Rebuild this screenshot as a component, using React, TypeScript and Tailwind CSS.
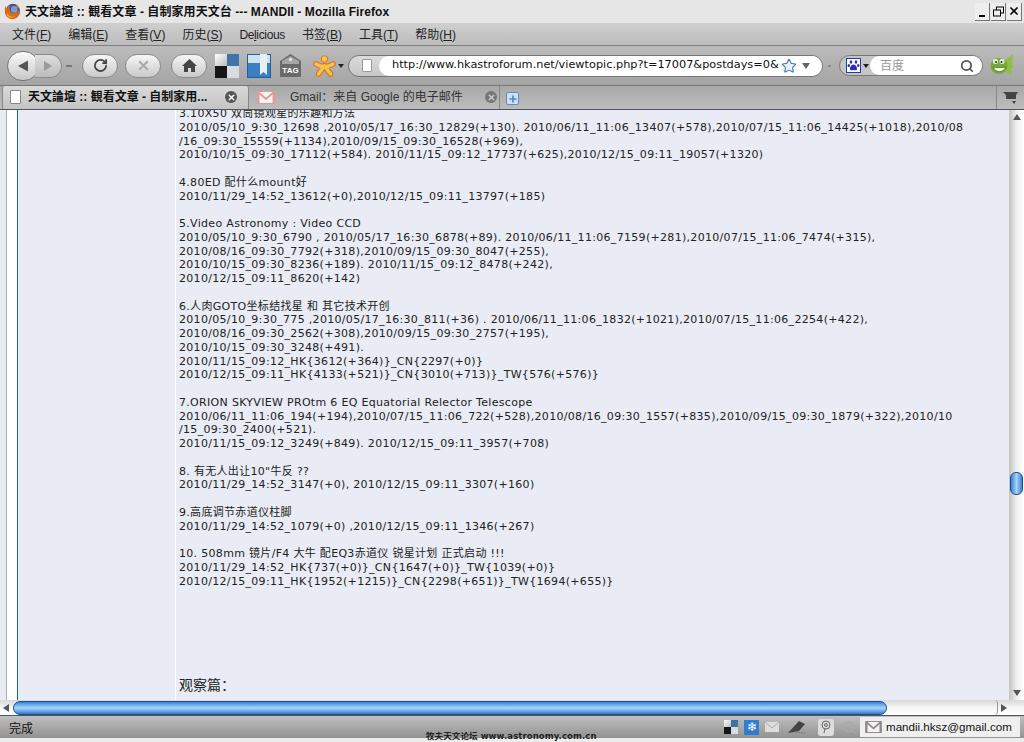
import { RotateCw, X, Search, Star, Plus } from 'lucide-react';

const lines = [
  '3.10X50 双筒镜观星的乐趣和方法',
  '2010/05/10_9:30_12698 ,2010/05/17_16:30_12829(+130). 2010/06/11_11:06_13407(+578),2010/07/15_11:06_14425(+1018),2010/08',
  '/16_09:30_15559(+1134),2010/09/15_09:30_16528(+969),',
  '2010/10/15_09:30_17112(+584). 2010/11/15_09:12_17737(+625),2010/12/15_09:11_19057(+1320)',
  '',
  '4.80ED 配什么mount好',
  '2010/11/29_14:52_13612(+0),2010/12/15_09:11_13797(+185)',
  '',
  '5.Video Astronomy : Video CCD',
  '2010/05/10_9:30_6790 , 2010/05/17_16:30_6878(+89). 2010/06/11_11:06_7159(+281),2010/07/15_11:06_7474(+315),',
  '2010/08/16_09:30_7792(+318),2010/09/15_09:30_8047(+255),',
  '2010/10/15_09:30_8236(+189). 2010/11/15_09:12_8478(+242),',
  '2010/12/15_09:11_8620(+142)',
  '',
  '6.人肉GOTO坐标结找星 和 其它技术开创',
  '2010/05/10_9:30_775 ,2010/05/17_16:30_811(+36) . 2010/06/11_11:06_1832(+1021),2010/07/15_11:06_2254(+422),',
  '2010/08/16_09:30_2562(+308),2010/09/15_09:30_2757(+195),',
  '2010/10/15_09:30_3248(+491).',
  '2010/11/15_09:12_HK{3612(+364)}_CN{2297(+0)}',
  '2010/12/15_09:11_HK{4133(+521)}_CN{3010(+713)}_TW{576(+576)}',
  '',
  '7.ORION SKYVIEW PROtm 6 EQ Equatorial Relector Telescope',
  '2010/06/11_11:06_194(+194),2010/07/15_11:06_722(+528),2010/08/16_09:30_1557(+835),2010/09/15_09:30_1879(+322),2010/10',
  '/15_09:30_2400(+521).',
  '2010/11/15_09:12_3249(+849). 2010/12/15_09:11_3957(+708)',
  '',
  '8. 有无人出让10"牛反 ??',
  '2010/11/29_14:52_3147(+0), 2010/12/15_09:11_3307(+160)',
  '',
  '9.高底调节赤道仪柱脚',
  '2010/11/29_14:52_1079(+0) ,2010/12/15_09:11_1346(+267)',
  '',
  '10. 508mm 镜片/F4 大牛 配EQ3赤道仪 锐星计划 正式启动 !!!',
  '2010/11/29_14:52_HK{737(+0)}_CN{1647(+0)}_TW{1039(+0)}',
  '2010/12/15_09:11_HK{1952(+1215)}_CN{2298(+651)}_TW{1694(+655)}',
];

const menus = [
  ['文件(', 'F', ')'],
  ['编辑(', 'E', ')'],
  ['查看(', 'V', ')'],
  ['历史(', 'S', ')'],
  ['De', 'l', 'icious'],
  ['书签(', 'B', ')'],
  ['工具(', 'T', ')'],
  ['帮助(', 'H', ')'],
];

function Firefox({ size = 17 }: { size?: number }) {
  return (
    <svg width={size} height={size} viewBox="0 0 20 20">
      <circle cx="10.500" cy="9.500" r="8.500" fill="#2f5797" />
      <circle cx="12" cy="7.500" r="4" fill="#7f9cc8" />
      <path d="M2 3c0 2 .5 3 1.500 4C4 5 6 3 8 3 6 5 6 7 7 9c1 3 5 4 8 2 2-1 3-3 3-5 2 5-1 13-8 13-5 0-9-4-9-9 0-3 0-5 1-7z" fill="#de6a12" />
      <path d="M4 12c2 4 7 5 10 3-3 3-9 3-11-1z" fill="#f3a02e" />
      <path d="M15 2c2 1 3 2 3 4l-3-1z" fill="#e78a1f" />
    </svg>
  );
}

function CheckerIcon({ size = 24 }: { size?: number }) {
  return (
    <svg width={size} height={size} viewBox="0 0 24 24">
      <defs>
        <linearGradient id="ck" x1="0" y1="0" x2="1" y2="1">
          <stop offset="0" stopColor="#fff" />
          <stop offset="1" stopColor="#bbb" />
        </linearGradient>
      </defs>
      <rect width="12" height="12" fill="url(#ck)" />
      <rect x="12" width="12" height="12" fill="#3f74ab" />
      <rect y="12" width="12" height="12" fill="#161616" />
      <rect x="12" y="12" width="12" height="12" fill="#d8dde2" />
    </svg>
  );
}

function BookmarkIcon() {
  return (
    <svg width="24" height="24" viewBox="0 0 24 24">
      <rect width="24" height="24" fill="#1f5f9f" />
      <rect x="1" y="1" width="22" height="8" fill="#cfe0ee" />
      <rect x="1" y="9" width="22" height="14" fill="#3a7fc0" />
      <path d="M13 0h7v21l-3.500-3-3.500 3z" fill="#e8eef4" />
    </svg>
  );
}

function TagIcon() {
  return (
    <svg width="21" height="23" viewBox="0 0 21 23">
      <path d="M0 7 10.500 0 21 7v16H0z" fill="#6a6a6a" />
      <path d="M2 7 10.500 2 19 7v3H2z" fill="#a5a5a5" />
      <circle cx="10.500" cy="5.500" r="1.500" fill="#efefef" />
      <text x="10.500" y="19" textAnchor="middle" fontSize="8" fontWeight="700" fill="#fff" fontFamily="Liberation Sans, sans-serif">TAG</text>
    </svg>
  );
}

function PersonIcon() {
  return (
    <svg width="23" height="22" viewBox="0 0 23 22" fill="none" strokeLinecap="round">
      <path d="M3 9c3 2 5 2.500 8.500 2.500S17 11 20 9M11.500 11 5.500 19M11.500 11l6 8" stroke="#d9701c" strokeWidth="5.500" />
      <path d="M3 9c3 2 5 2.500 8.500 2.500S17 11 20 9M11.500 11 5.500 19M11.500 11l6 8" stroke="#fbc34a" strokeWidth="3.500" />
      <circle cx="11.500" cy="4" r="3.300" fill="#fbc34a" stroke="#d9701c" />
    </svg>
  );
}

function Gator() {
  return (
    <svg width="25" height="24" viewBox="0 0 25 24">
      <path d="M13 8 23 0l-1 10 2 3-3 1 1 7-8-4z" fill="#8fbf45" />
      <ellipse cx="9" cy="12" rx="8.500" ry="8" fill="#7aa838" />
      <circle cx="5.500" cy="7.500" r="2.500" fill="#e8f2d8" />
      <circle cx="12" cy="7.500" r="2.500" fill="#e8f2d8" />
      <circle cx="6" cy="8" r="1" fill="#222" />
      <circle cx="11.500" cy="8" r="1" fill="#222" />
      <path d="M3 13c3 6 10 6 13 0-3 1-10 1-13 0z" fill="#fff" stroke="#3c6a16" strokeWidth=".7" />
    </svg>
  );
}

function Paw() {
  return (
    <svg width="15" height="15" viewBox="0 0 15 15">
      <rect x=".5" y=".5" width="14" height="14" fill="#fff" stroke="#1e3f94" />
      <g fill="#2a2ac0">
        <ellipse cx="5" cy="4" rx="1.300" ry="1.800" />
        <ellipse cx="10" cy="4" rx="1.300" ry="1.800" />
        <ellipse cx="2.800" cy="7.500" rx="1.200" ry="1.600" />
        <ellipse cx="12.200" cy="7.500" rx="1.200" ry="1.600" />
        <path d="M7.500 6.500c2 0 4 3 3.500 5-1 1.500-2.500.5-3.500.5S5 13 4 11.500C3.500 9.500 5.500 6.500 7.500 6.500z" />
      </g>
    </svg>
  );
}

function GmailM({ w = 18, h = 13, color = '#e49a9a' }: { w?: number; h?: number; color?: string }) {
  return (
    <svg width={w} height={h} viewBox="0 0 18 13">
      <rect x=".5" y=".5" width="17" height="12" fill="#f6f2f2" stroke={color} />
      <path d="M1 1l8 7 8-7" fill="none" stroke={color} strokeWidth="2" />
      <path d="M1.500 1v11M16.500 1v11" stroke={color} strokeWidth="2" />
    </svg>
  );
}

function PillButton({ children, className }: { children: React.ReactNode; className: string }) {
  return (
    <div className={`flex h-[24px] items-center justify-center rounded-full border border-[#8b8b8b] bg-gradient-to-b from-[#f6f6f6] to-[#c9c9c9] ${className}`}>
      {children}
    </div>
  );
}

export default function App() {
  return (
    <div className="relative flex h-[742px] w-[1024px] flex-col overflow-hidden bg-white font-['Liberation_Sans','Noto_Sans_CJK_SC',sans-serif] text-[#1c1c1c]">
      {/* Title bar */}
      <div className="flex h-[23px] shrink-0 items-center bg-[#e6e6e6] pl-[4px] pr-[2px]">
        <Firefox />
        <span className="ml-[4px] text-[12px] font-bold tracking-[0.07px] text-[#111]">天文論壇 :: 観看文章 - 自制家用天文台 --- MANDII - Mozilla Firefox</span>
        <div className="ml-auto flex gap-[1px]">
          <div className="flex h-[18px] w-[15px] items-end justify-center border-r border-b border-[#777] bg-[#eee] pb-[3px]"><div className="h-[2px] w-[6px] bg-black" /></div>
          <div className="flex h-[18px] w-[15px] items-center justify-center border-r border-b border-[#777] bg-[#eee]">
            <svg width="11" height="11" viewBox="0 0 11 11" fill="none" stroke="#000"><rect x="3.500" y="1" width="7" height="6" /><rect x=".5" y="4" width="7" height="6" fill="#eee" /></svg>
          </div>
          <div className="flex h-[18px] w-[15px] items-center justify-center border-r border-b border-[#777] bg-[#eee]"><X size={12} strokeWidth={3.5} color="#000" /></div>
        </div>
      </div>
      {/* Menu */}
      <div className="flex h-[23px] shrink-0 items-center gap-[17px] border-b border-[#7d7d7d] bg-gradient-to-b from-[#cfcfcf] to-[#bdbdbd] pl-[12px] pt-[2px] text-[12px] text-[#222]">
        {menus.map((m) => (
          <span key={m[0]} className={m[0] === 'De' ? 'tracking-[-0.35px]' : ''}>{m[0]}<span className="underline">{m[1]}</span>{m[2]}</span>
        ))}
      </div>
      {/* Nav toolbar */}
      <div className="flex h-[39px] shrink-0 items-center bg-gradient-to-b from-[#bcbcbc] to-[#a4a4a4] pl-[7px]">
        <div className="flex h-[30px] w-[32px] items-center justify-center rounded-full border border-[#777] bg-gradient-to-b from-[#fafafa] to-[#c8c8c8]">
          <svg width="12" height="12" viewBox="0 0 12 12"><path d="M1 6l10-5.500v11z" fill="#555" /></svg>
        </div>
        <div className="ml-[-4px] flex h-[24px] w-[27px] items-center justify-center rounded-r-full border border-l-0 border-[#8b8b8b] bg-gradient-to-b from-[#dedede] to-[#bcbcbc]">
          <svg width="10" height="10" viewBox="0 0 10 10"><path d="M1 0l8 5-8 5z" fill="#9a9a9a" /></svg>
        </div>
        <div className="ml-[4px] h-[2px] w-[6px] bg-[#777]" />
        <PillButton className="ml-[10px] w-[36px]"><RotateCw size={15} strokeWidth={2.8} color="#444" /></PillButton>
        <PillButton className="ml-[7px] w-[36px]"><X size={15} strokeWidth={3} color="#a9a9a9" /></PillButton>
        <PillButton className="ml-[10px] w-[36px]">
          <svg width="15" height="13" viewBox="0 0 15 13"><path d="M7.500 0 15 7h-2v6H9V9H6v4H2V7H0z" fill="#444" /></svg>
        </PillButton>
        <div className="ml-[8px]"><CheckerIcon /></div>
        <div className="ml-[8px]"><BookmarkIcon /></div>
        <div className="ml-[9px]"><TagIcon /></div>
        <div className="ml-[12px]"><PersonIcon /></div>
        <div className="ml-[2px] h-0 w-0 border-x-[3px] border-t-[4px] border-x-transparent border-t-[#222]" />
        {/* URL bar */}
        <div className="ml-[4px] flex h-[22px] w-[475px] items-center rounded-full border border-[#777] bg-gradient-to-b from-[#dcdcdc] to-[#c6c6c6] pl-[13px]">
          <div className="h-[13px] w-[10px] rounded-[1px] border border-[#999] bg-white" />
          <div className="ml-[7px] flex h-full flex-1 items-center overflow-hidden rounded-full bg-white pl-[13px]">
            <span className="flex-1 whitespace-nowrap font-['DejaVu_Sans',sans-serif] text-[11.3px] text-[#111]">http://www.hkastroforum.net/viewtopic.php?t=17007&amp;postdays=0&amp;</span>
            <Star size={16} strokeWidth={1.6} color="#3f74ab" fill="#eaf2fa" className="ml-[2px] shrink-0" />
            <div className="ml-[5px] mr-[12px] h-0 w-0 border-x-[4px] border-t-[6px] border-x-transparent border-t-[#666]" />
          </div>
        </div>
        <div className="ml-[5px] h-[2px] w-[3px] bg-[#888]" />
        <div className="ml-[8px] flex h-[21px] w-[144px] items-center rounded-full border border-[#777] bg-[#c6c6c6] pl-[6px]">
          <Paw />
          <div className="ml-[2px] h-0 w-0 border-x-[3px] border-t-[4px] border-x-transparent border-t-[#222]" />
          <div className="ml-[1px] flex h-full flex-1 items-center rounded-full bg-white pl-[10px] pr-[8px]">
            <span className="flex-1 text-[12px] text-[#9a9a9a]">百度</span>
            <Search size={14} strokeWidth={3} color="#555" />
          </div>
        </div>
        <div className="ml-[7px]"><Gator /></div>
      </div>
      {/* Tabs */}
      <div className="flex h-[25px] shrink-0 items-end border-y border-t-[#777] border-b-[#555] bg-gradient-to-b from-[#a8a8a8] to-[#bdbdbd] pl-[2px]">
        <div className="flex h-[23px] w-[247px] items-center rounded-t-[3px] border-x border-[#888] bg-gradient-to-b from-[#d9d9d9] to-[#c4c4c4] pb-[1px] pl-[7px]">
          <div className="h-[14px] w-[11px] rounded-[1px] border border-[#888] bg-white" />
          <span className="ml-[7px] w-[197px] whitespace-nowrap text-[12px] font-bold text-[#111]">天文論壇 :: 観看文章 - 自制家用...</span>
          <div className="flex h-[12px] w-[12px] items-center justify-center rounded-full bg-[#555]"><X size={9} strokeWidth={4} color="#fff" /></div>
        </div>
        <div className="ml-[2px] flex h-[23px] w-[249px] items-center border-r border-[#888] pb-[1px] pl-[6px]">
          <GmailM />
          <span className="ml-[15px] w-[195px] text-[12px] text-[#333]">Gmail：来自 Google 的电子邮件</span>
          <div className="flex h-[12px] w-[12px] items-center justify-center rounded-full bg-[#777]"><X size={9} strokeWidth={4} color="#ccc" /></div>
        </div>
        <div className="ml-[6px] mb-[4px] flex h-[13px] w-[13px] items-center justify-center rounded-[2px] border border-[#5c8fc7] bg-[#cfe0f2]"><Plus size={10} strokeWidth={4} color="#4f86c6" /></div>
        <div className="ml-auto flex h-[23px] w-[28px] items-center justify-center border-l border-[#888]">
          <svg width="15" height="12" viewBox="0 0 15 12"><path d="M0 0h15l-2 3v4H3V3z" fill="#444" /><path d="M9 9h4l-2 3z" fill="#444" /></svg>
        </div>
      </div>
      {/* Page + vertical scrollbar */}
      <div className="flex min-h-0 flex-1">
        <div className="flex min-w-0 flex-1">
          <div className="w-[6px] shrink-0 bg-[#e9ecf4]" />
          <div className="w-[1px] shrink-0 bg-[#a9acb2]" />
          <div className="w-[10px] shrink-0 bg-white" />
          <div className="w-[1px] shrink-0 bg-[#1f6f68]" />
          <div className="w-[157px] shrink-0 bg-[#e9ecf4]" />
          <div className="w-[1px] shrink-0 bg-white" />
          <div className="min-w-0 flex-1 overflow-hidden bg-[#e9ecf4] pl-[3px]">
            <div className="mt-[-3px] whitespace-nowrap font-['DejaVu_Sans','Noto_Sans_CJK_SC',sans-serif] text-[11px] leading-[13.76px] tracking-[0.31px] text-[#222]">
              {lines.map((line, i) => (
                <div key={i} className="h-[13.76px]">{line}</div>
              ))}
            </div>
            <div className="mt-[89px] font-['DejaVu_Sans','Noto_Sans_CJK_SC',sans-serif] text-[14px] leading-[16px] text-[#222]">观察篇：</div>
          </div>
        </div>
        <div className="flex w-[15px] shrink-0 flex-col items-center bg-gradient-to-r from-[#c2c2c2] via-[#eeeeee] to-white">
          <div className="mt-[4px] h-0 w-0 border-x-[4px] border-b-[6px] border-x-transparent border-b-[#555]" />
          <div className="mt-[352px] h-[23px] w-[13px] rounded-[6px] border border-[#1d4f8f] bg-gradient-to-r from-[#3d7fd0] via-[#a8d2f8] to-[#3d7fd0]" />
          <div className="mt-auto mb-[4px] h-0 w-0 border-x-[4px] border-t-[6px] border-x-transparent border-t-[#555]" />
        </div>
      </div>
      {/* Horizontal scrollbar */}
      <div className="flex h-[15px] shrink-0 items-center bg-gradient-to-b from-[#d8d8d8] via-[#f4f4f4] to-white pl-[3px]">
        <div className="h-0 w-0 border-y-[4px] border-r-[6px] border-y-transparent border-r-[#555]" />
        <div className="ml-[4px] h-[14px] w-[874px] rounded-[7px] border border-[#1d4f8f] bg-gradient-to-b from-[#3480dc] via-[#a8d8fa] to-[#2f78d4]" />
        <div className="ml-[107px] h-[15px] w-[4px] rounded-r-[4px] border-r border-[#999]" />
        <div className="ml-[3px] h-0 w-0 border-y-[4px] border-l-[6px] border-y-transparent border-l-[#555]" />
      </div>
      {/* Status bar */}
      <div className="flex h-[23px] shrink-0 items-center border-t border-[#555] bg-gradient-to-b from-[#c0c0c0] to-[#929292] pl-[9px] pr-[4px]">
        <span className="pt-[3px] text-[12px] text-[#111]">完成</span>
        <div className="ml-auto flex items-center">
          <CheckerIcon size={14} />
          <div className="ml-[6px] flex h-[15px] w-[15px] items-center justify-center bg-[#2f7fd0] text-[12px] leading-none text-white">❄</div>
          <svg className="ml-[6px]" width="14" height="10" viewBox="0 0 14 10"><rect width="14" height="10" fill="#ddd" /><path d="M0 0l7 6 7-6" fill="none" stroke="#aaa" /></svg>
          <svg className="ml-[8px]" width="20" height="16" viewBox="0 0 20 16"><path d="M1 14 12 2l6 3-6 7z" fill="#444" /><path d="M8 13l10 1" stroke="#777" strokeDasharray="2 1" /></svg>
          <div className="ml-[11px] flex h-[17px] w-[16px] items-center justify-center rounded-[3px] bg-[#ddd]">
            <svg width="10" height="14" viewBox="0 0 10 14" fill="none" stroke="#666"><circle cx="5" cy="5" r="4" /><circle cx="5" cy="5" r="1.500" /><path d="M4 9l-1 4" /></svg>
          </div>
          <Search className="ml-[8px]" size={15} color="#aaa" strokeWidth={2} />
          <div className="ml-[3px] flex h-[20px] w-[160px] items-center bg-[#efefef] pl-[5px]">
            <GmailM w={17} h={12} color="#8a8a8a" />
            <span className="ml-[4px] text-[11.6px] text-[#111]">mandii.hksz@gmail.com</span>
          </div>
        </div>
      </div>
      <div className="h-[4px] shrink-0 bg-[#ececec]" />
      {/* Forum watermark over the screenshot */}
      <div className="absolute left-[426px] top-[731px] whitespace-nowrap font-['DejaVu_Sans','Noto_Sans_CJK_SC',sans-serif] text-[8.5px] font-bold leading-[10px] tracking-[0.1px] text-[#222]">牧夫天文论坛 www.astronomy.com.cn</div>
    </div>
  );
}
